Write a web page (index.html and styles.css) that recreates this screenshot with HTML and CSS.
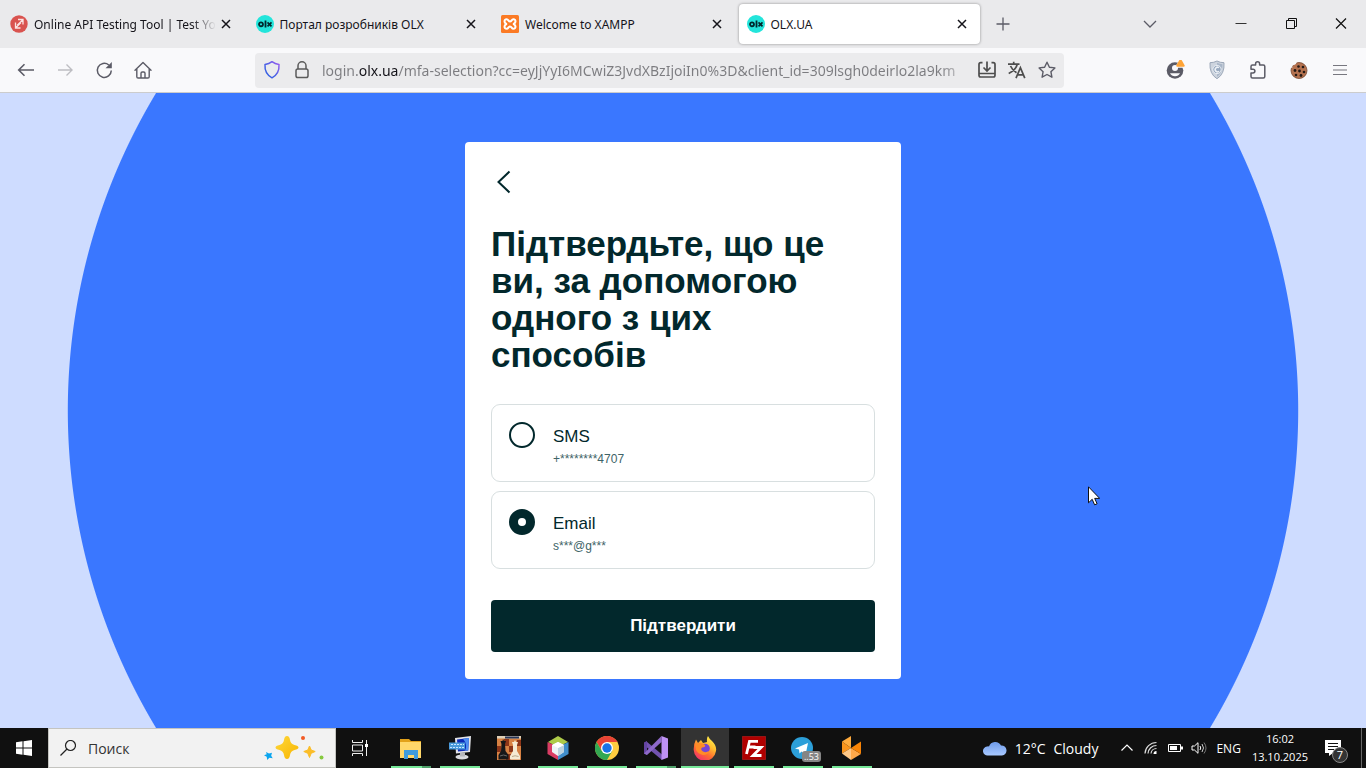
FILE: index.html
```html
<!DOCTYPE html>
<html lang="uk">
<head>
<meta charset="utf-8">
<title>OLX.UA</title>
<link rel="stylesheet" href="styles.css">
</head>
<body>
<svg class="defs" aria-hidden="true">
  <symbol id="close" viewBox="0 0 16 16"><path d="M4 4l8 8M12 4l-8 8" fill="none" stroke="#15141a" stroke-width="1.5"/></symbol>
  <symbol id="olx" viewBox="0 0 18 18"><circle cx="9" cy="9" r="9" fill="#23e5db"/><circle cx="5" cy="9.300" r="2" fill="none" stroke="#02282c" stroke-width="1.800"/><path d="M9.500 5.500v7" stroke="#02282c" stroke-width="1.800"/><path d="M11.500 7.300l4 4M15.500 7.300l-4 4" stroke="#02282c" stroke-width="1.700"/></symbol>
</svg>

<header class="browser">
  <div class="tabstrip">
    <div class="tabs">
      <div class="tab">
        <button class="tab-title fade" type="button">
          <svg class="favicon" viewBox="0 0 18 18"><circle cx="9" cy="9" r="8.700" fill="#d9534f"/><path d="M8 4.500h5v5M12.700 5L7 10.500M5.500 7.500v5.500h5M6 12.500l5-5" fill="none" stroke="#fbe3e2" stroke-width="1.300"/></svg>
          <span>Online API Testing Tool | Test Yo</span>
        </button>
        <button class="tab-close" type="button" aria-label="Close tab"><svg class="i16"><use href="#close"/></svg></button>
      </div>
      <div class="tab">
        <button class="tab-title" type="button"><svg class="favicon"><use href="#olx"/></svg><span>Портал розробників OLX</span></button>
        <button class="tab-close" type="button" aria-label="Close tab"><svg class="i16"><use href="#close"/></svg></button>
      </div>
      <div class="tab">
        <button class="tab-title" type="button">
          <svg class="favicon" viewBox="0 0 18 18"><rect width="18" height="18" rx="1.500" fill="#fb7a24"/><path d="M6 9C3 8.500 2.500 4.200 5.700 4.200C7.500 4.200 7.200 6.500 9 6.500S10.500 4.200 12.300 4.200C15.500 4.200 15 8.500 12 9C15 9.500 15.500 13.800 12.300 13.800C10.500 13.800 10.800 11.500 9 11.500S7.500 13.800 5.700 13.800C2.500 13.800 3 9.500 6 9z" fill="none" stroke="#fff" stroke-width="2"/></svg>
          <span>Welcome to XAMPP</span>
        </button>
        <button class="tab-close" type="button" aria-label="Close tab"><svg class="i16"><use href="#close"/></svg></button>
      </div>
      <div class="tab active">
        <button class="tab-title" type="button"><svg class="favicon"><use href="#olx"/></svg><span>OLX.UA</span></button>
        <button class="tab-close" type="button" aria-label="Close tab"><svg class="i16"><use href="#close"/></svg></button>
      </div>
    </div>
    <button class="new-tab" type="button" aria-label="New tab"><svg class="i16" viewBox="0 0 16 16"><path d="M8 1.500v13M1.500 8h13" stroke="#5b5b66" stroke-width="1.300"/></svg></button>
    <button class="all-tabs" type="button" aria-label="List all tabs"><svg class="i16" viewBox="0 0 16 16"><path d="M2 5l6 6 6-6" fill="none" stroke="#5b5b66" stroke-width="1.300"/></svg></button>
    <div class="window-buttons">
      <button type="button" aria-label="Minimize"><svg class="i16" viewBox="0 0 16 16"><path d="M2.500 7.500h11" stroke="#333" /></svg></button>
      <button type="button" aria-label="Restore"><svg class="i16" viewBox="0 0 16 16"><path d="M5.500 4.500v-2h8v8h-2M3.500 4.500h8v8h-8z" fill="none" stroke="#111"/></svg></button>
      <button type="button" aria-label="Close"><svg class="i16" viewBox="0 0 16 16"><path d="M3 2.500l10 10M13 2.500l-10 10" stroke="#111" stroke-width="1.200"/></svg></button>
    </div>
  </div>

  <div class="toolbar">
    <nav class="nav-buttons" aria-label="Navigation">
      <button type="button" aria-label="Back"><svg class="i20" viewBox="0 0 20 20"><path d="M18 10H2.800M8.500 4.200L2.700 10l5.800 5.800" fill="none" stroke="#5b5b66" stroke-width="1.600"/></svg></button>
      <button type="button" aria-label="Forward" disabled><svg class="i20" viewBox="0 0 20 20"><path d="M3 10h14M11.500 4.500L17 10l-5.500 5.500" fill="none" stroke="#bdbdc2" stroke-width="1.400"/></svg></button>
      <button type="button" aria-label="Reload"><svg class="i20" viewBox="0 0 20 20"><path d="M17.300 10.500A7 7 0 1 1 14.800 5" fill="none" stroke="#5b5b66" stroke-width="1.500"/><path d="M17.800 2v6.300h-6.300z" fill="#5b5b66"/></svg></button>
      <button type="button" aria-label="Home"><svg class="i20" viewBox="0 0 20 20"><path d="M2 10.200L10 2.500l8 7.700M3.800 8.800v7.900q0 1.300 1.300 1.300h9.800q1.300 0 1.300-1.300V8.800M8 18v-4.700q0-1.300 1.300-1.300h1.400q1.300 0 1.300 1.300V18" fill="none" stroke="#5b5b66" stroke-width="1.400" stroke-linejoin="round" stroke-linecap="round"/></svg></button>
    </nav>

    <div class="urlbar">
      <svg class="i20" viewBox="0 0 20 20"><defs><linearGradient id="shield" x1="1" y1="0" x2="0" y2="1"><stop offset="0" stop-color="#a05cf0"/><stop offset=".5" stop-color="#4f5fe6"/><stop offset="1" stop-color="#2a62e0"/></linearGradient></defs><path d="M10 1.700c2 1.500 4.500 2.400 7 2.700c.4 6-1.700 10.700-7 13.400C4.700 15.100 2.600 10.400 3 4.400c2.500-.3 5-1.200 7-2.700z" fill="none" stroke="url(#shield)" stroke-width="1.500" stroke-linejoin="round"/></svg>
      <svg class="i20" viewBox="0 0 20 20"><path d="M6 9V5.800a4 4 0 0 1 8 0V9" fill="none" stroke="#5b5b5b" stroke-width="1.500"/><rect x="4" y="9" width="12" height="8.500" rx="1.800" fill="none" stroke="#5b5b5b" stroke-width="1.500"/></svg>
      <input class="url" type="text" aria-label="Address" value="login.olx.ua/mfa-selection?cc=eyJjYyI6MCwiZ3JvdXBzIjoiIn0%3D&amp;client_id=309lsgh0deirlo2la9km">
      <button type="button" aria-label="Install"><svg class="i20" viewBox="0 0 20 20"><path d="M5.500 2.700H3.700Q2 2.700 2 4.400v10.900Q2 17 3.700 17h12.600Q18 17 18 15.300V4.400Q18 2.700 16.300 2.700h-1.800M2 13.500h16" fill="none" stroke="#4d4d4d" stroke-width="1.700"/><path d="M10 1.500v9M6.500 7.500L10 11l3.500-3.500" fill="none" stroke="#4d4d4d" stroke-width="1.700"/></svg></button>
      <button type="button" aria-label="Translate"><svg class="i20" viewBox="0 0 20 20"><path d="M1 4.200h11.500M6.700 1.800v2.400M10.200 4.500C9 8.500 5.500 11.800 1.700 13.500M3.500 6c1.200 2.800 3.200 5 6 6.800M9 18.200l4.400-10.500 4.400 10.500M10.500 14.800h5.800" fill="none" stroke="#4d4d4d" stroke-width="1.700"/></svg></button>
      <button type="button" aria-label="Bookmark"><svg class="i20" viewBox="0 0 20 20"><path d="M10 2.200l2.400 5 5.500.7-4 3.800 1 5.500-4.900-2.700-4.900 2.700 1-5.500-4-3.800 5.500-.7z" fill="none" stroke="#5b5b66" stroke-width="1.400" stroke-linejoin="round"/></svg></button>
    </div>

    <div class="extensions">
      <button type="button" aria-label="Account"><svg class="i20" viewBox="0 0 20 20"><circle cx="9" cy="10.500" r="8.300" fill="#5b5b66"/><circle cx="9" cy="8" r="3" fill="#f9f9fb"/><path d="M4 13.200h10q-1.500 3-5 3t-5-3z" fill="#f9f9fb"/><path d="M14.300-1.200l5.700 9H8.600z" fill="#f9f9fb"/><path d="M14.500-.6q.8 0 1.300.9l2.800 5q.5 1.300-1 1.500h-6.200q-1.500-.2-1-1.500l2.800-5q.5-.9 1.300-.9z" fill="#ffa436"/></svg></button>
      <button type="button" aria-label="Privacy shield"><svg class="i20" viewBox="0 0 20 20"><path d="M10 1q3 1.700 7 1.700q.8 11.300-7 16Q2.200 14 3 2.700Q7 2.700 10 1z" fill="#cdd4de" stroke="#9ba7b8"/><path d="M10 2.800q2.500 1.300 5.500 1.500q.3 8.700-5.500 12.500z" fill="#a9b6c8"/><circle cx="10" cy="9.500" r="4.200" fill="#98a9bf" stroke="#edf1f6"/><path d="M12 7.800a2.300 2.300 0 1 0 0 3.500" fill="none" stroke="#edf1f6" stroke-width="1.500"/></svg></button>
      <button type="button" aria-label="Extensions"><svg class="i20" viewBox="0 0 20 20"><path d="M3 8V6.500Q3 5 4.500 5H7.600V3.700a2 2 0 0 1 4 0V5h3.700q1.500 0 1.500 1.500v10q0 1.500-1.500 1.500H4.500Q3 18 3 16.500V13h2a1.900 1.900 0 0 0 0-3.800H3z" fill="none" stroke="#5b5b66" stroke-width="1.500" stroke-linejoin="round"/></svg></button>
      <button type="button" aria-label="Cookies"><svg class="i20" viewBox="0 0 20 20"><circle cx="10" cy="10.500" r="8" fill="#b5724f" stroke="#75462f" stroke-width=".8"/><path d="M1 1h7q-.500 3.500-3 4t-1.500 2.500L1 8z" fill="#f9f9fb"/><g fill="#251a16"><circle cx="9.500" cy="6.500" r="1.300"/><circle cx="14" cy="7" r="1.300"/><circle cx="6" cy="10.500" r="1.400"/><circle cx="10.500" cy="11" r="1.400"/><circle cx="15" cy="12" r="1.300"/><circle cx="7" cy="15" r="1.300"/><circle cx="12" cy="15.500" r="1.400"/></g></svg></button>
      <button type="button" aria-label="Menu"><svg class="i20" viewBox="0 0 20 20"><path d="M3 5.500h14M3 10h14M3 14.500h14" stroke="#77777f" stroke-width="1.200"/></svg></button>
    </div>
  </div>
</header>

<main class="page">
  <form class="card">
    <button class="back" type="button" aria-label="Назад"><svg viewBox="0 0 26 26"><path d="M18.500 2.500L7.500 13l11 10.500" fill="none" stroke="#02282c" stroke-width="2"/></svg></button>
    <h1 class="heading">Підтвердьте, що це ви, за допомогою одного з цих способів</h1>
    <div class="options">
      <label class="option">
        <input class="radio" type="radio" name="method" value="sms">
        <span class="option-text"><span class="option-name">SMS</span><span class="option-hint">+********4707</span></span>
      </label>
      <label class="option">
        <input class="radio" type="radio" name="method" value="email" checked>
        <span class="option-text"><span class="option-name">Email</span><span class="option-hint">s***@g***</span></span>
      </label>
    </div>
    <button class="confirm" type="button">Підтвердити</button>
  </form>
  <svg class="cursor" viewBox="0 0 12 20"><path d="M.500 .800v16l3.700-3.500 2.400 5.500 2.500-1-2.400-5.400h5z" fill="#fff" stroke="#111"/></svg>
</main>

<footer class="taskbar">
  <button class="start" type="button" aria-label="Start"><svg class="i16" viewBox="0 0 16 16"><path d="M0 2.300L6.500 1.300V7.500H0zM7.500 1.200L16 0v7.500H7.500zM0 8.500h6.500v6.200L0 13.700zM7.500 8.500H16V16l-8.500-1.200z" fill="#fff"/></svg></button>
  <label class="search">
    <svg class="i16" viewBox="0 0 16 16"><circle cx="10.500" cy="5.500" r="5" fill="none" stroke="#222" stroke-width="1.200"/><path d="M7 9L.500 15.500" stroke="#222" stroke-width="1.300"/></svg>
    <input type="text" aria-label="Поиск" placeholder="Поиск">
    <svg class="sparkles" viewBox="0 0 62 26"><defs><linearGradient id="gold" x1="0" y1="0" x2="1" y2="1"><stop offset="0" stop-color="#ffd83b"/><stop offset="1" stop-color="#f7b500"/></linearGradient></defs><path d="M24 1q2.500 0 3 4 .6 4 4.500 5 4 .8 4 2.500t-4 2.500q-3.900 1-4.500 5-.5 4-3 4t-3-4q-.6-4-4.500-5-4-.8-4-2.500t4-2.500q3.900-1 4.500-5 .5-4 3-4z" fill="url(#gold)"/><path d="M46.500 11l1.700 4 4 1.500-4 1.800-1.700 4.200-1.700-4.200-4-1.800 4-1.500z" fill="#fbbd28" stroke="#fbbd28" stroke-linejoin="round"/><path d="M3 17l3 1.500 3-.8-.8 3 1.500 2.500-3.300-.5-2.200 2.300-.5-3.200-2.700-1.500 2.700-1z" fill="#0aa5ef"/><circle cx="40" cy="3" r="2" fill="#f25a24"/><circle cx="58.500" cy="22.500" r="2" fill="#86c940"/></svg>
  </label>
  <button class="task-view" type="button" aria-label="Task view"><svg class="i16" viewBox="0 0 16 16"><path d="M.500 0v2.500h10V0M.500 16v-2.500h10V16M.500 5h10v6H.500zM14.500 0v16" fill="none" stroke="#eee"/><path d="M13 4h3v3h-3z" fill="#fff"/></svg></button>

  <div class="apps">
    <button class="app open multi" type="button" aria-label="Explorer"><svg viewBox="0 0 24 24"><path d="M1 3h9l2 2h10v4H1z" fill="#e2a11a"/><path d="M1 6h21v16H1z" fill="#ffd76a"/><path d="M5 23v-9h14v9h-4v-4H9v4z" fill="#3e9bdd"/></svg></button>
    <button class="app open" type="button" aria-label="Remote desktop"><svg viewBox="0 0 24 24"><path d="M7 2l16-2-1 16-14 1.500z" fill="#e3e4e8"/><path d="M9 3.500l12-1.500-.8 12.500L10 15.500z" fill="#0c2bb8"/><path d="M15 2.700l6-.7-.8 12.500-3.200.3q3-6-2-12.100z" fill="#4d8df0"/><ellipse cx="14" cy="21" rx="6.500" ry="2.500" fill="#d9dbde"/><path d="M12 16.500h5v4h-5z" fill="#b5b7bb"/><path d="M1 6.500h16v7H1z" fill="#4a9adb"/><path d="M3 8.500h13M2 11.500h14" stroke="#c8e6ff" stroke-dasharray="2 1"/></svg></button>
    <button class="app" type="button" aria-label="Chess"><svg viewBox="0 0 24 24"><path d="M0 0h24v24H0z" fill="#d78143"/><path d="M7 3h5v7H7zM0 10h4v6H0zM12 10h4v6h-4zM20 4h4v6h-4zM9 18h5v6H9z" fill="#8d3518"/><path d="M0 0h24v2.500H0z" fill="#dfd0b8"/><path d="M8 .500h14v2H8z" fill="#26365a"/><path d="M6 3l1 2h2L8 8l.5 7 3 4v4.500H1.500V19l2.500-4L4.500 8l-1-3h2z" fill="#171719"/><path d="M3 20q3.500-2 7 0" fill="none" stroke="#666"/><path d="M18 4l1 2h2l-1 3v6l3 5v3.500H13V20l3-5V9l-1-3h2z" fill="#f5ead2"/><path d="M15 20.500q3-1.500 6.500 0" fill="none" stroke="#b7a98b"/></svg></button>
    <button class="app open" type="button" aria-label="NetBeans"><svg viewBox="0 0 24 24"><path d="M12 0l10 6-10 5L2 6z" fill="#aecb49"/><path d="M1.500 6L12 11v13L1.500 18z" fill="#d93c63"/><path d="M22.500 6L12 11v13l10.500-6z" fill="#408ecb"/><path d="M12 6l6 3v7l-6 4-6-4V9z" fill="#edf4f7"/><path d="M12 12l6-3v7l-6 4z" fill="#bdd3df"/><path d="M6 9l6 3 6-3-6-3z" fill="#fff"/></svg></button>
    <button class="app open" type="button" aria-label="Chrome"><svg viewBox="0 0 24 24"><circle cx="12" cy="12" r="12" fill="#ffcd40"/><path d="M1.600 6A12 12 0 0 1 22.400 6H12L6.800 15z" fill="#e94335"/><path d="M1.600 6A12 12 0 0 0 12 24l5.200-9-10.400 0z" fill="#33a852"/><circle cx="12" cy="12" r="6" fill="#fff"/><circle cx="12" cy="12" r="4.700" fill="#1a73e8"/></svg></button>
    <button class="app open multi" type="button" aria-label="Visual Studio"><svg viewBox="0 0 24 24"><path d="M0 7l2.500-1.500L18 18.500V24L0 9z" fill="#7252b0"/><path d="M0 6.500l3-1.500v14l-3-1.500z" fill="#6444a2"/><path d="M0 17.500L17.500 0v6L3 19z" fill="#8e69ca"/><path d="M17.500 0L24 2.500v19L17.500 24z" fill="#be91f4"/></svg></button>
    <button class="app open current" type="button" aria-label="Firefox"><svg viewBox="0 0 24 24"><defs><linearGradient id="fox" x1=".8" y1="0" x2=".2" y2="1"><stop offset="0" stop-color="#fff44f"/><stop offset=".35" stop-color="#ffbd2f"/><stop offset=".65" stop-color="#ff6a30"/><stop offset="1" stop-color="#f02a74"/></linearGradient></defs><path d="M15 0q2 4 4 5 5 5 4 10a11.200 11.200 0 0 1-22.300-1Q.500 8 3 3.500L5 7l3-3 2 3 4-1q-.500-4 1-6z" fill="url(#fox)"/><circle cx="12" cy="12.500" r="4.800" fill="#7645d6"/><path d="M2 8q6-2.500 10 1 1 2-3 2.500-2 2 1 4 3 1.500 6-.500-1 4-6 4-5-1-7-5z" fill="#ff8c27"/></svg></button>
    <button class="app open" type="button" aria-label="FileZilla"><svg viewBox="0 0 24 24"><path d="M.500 .500h23v23H.500z" fill="#b00000" stroke="#d02020" stroke-dasharray="1 1"/><path d="M4.500 18L7.500 5.300h8.500M6.500 11h7M11.500 11.500h7.500l-8 8h8.500" fill="none" stroke="#fff" stroke-width="2.800"/></svg></button>
    <button class="app open" type="button" aria-label="Telegram"><svg viewBox="0 0 24 24"><circle cx="11" cy="12" r="11" fill="#2c9fd9"/><path d="M4 12.500L17 7l-2.500 12-4-3.500-2 2-.500-4z" fill="#fff"/></svg><span class="badge">..53</span></button>
    <button class="app open" type="button" aria-label="Local server"><svg viewBox="0 0 24 24"><path d="M2 5.500L11 0v12z" fill="#ffab3d"/><path d="M2 5.500L11 12 2 17.500z" fill="#f9941d"/><path d="M2 17.500L11 12v12z" fill="#ffc887"/><path d="M11 12l10 6-10 6z" fill="#ffa94a"/><path d="M11 12l10-6.500V18z" fill="#f98406"/></svg></button>
  </div>

  <div class="tray">
    <button class="weather" type="button">
      <svg viewBox="0 0 24 18"><defs><linearGradient id="cloud" x1="0" y1="0" x2="0" y2="1"><stop offset="0" stop-color="#6e9bea"/><stop offset="1" stop-color="#a9c9ff"/></linearGradient></defs><path d="M5 16.500a4.500 4.500 0 0 1-1-9q1.500-.500 2 0A6.500 6.500 0 0 1 18 6.500a5 5 0 0 1 1 10z" fill="url(#cloud)"/></svg>
      <span>12°C</span><span>Cloudy</span>
    </button>
    <button type="button" aria-label="Hidden icons"><svg class="i16" viewBox="0 0 16 16"><path d="M2.500 10.500L8 5l5.500 5.500" fill="none" stroke="#fff" stroke-width="1.200"/></svg></button>
    <button type="button" aria-label="Network"><svg class="i16" viewBox="0 0 16 16"><g fill="none" stroke="#ddd" stroke-width="1.200"><path d="M2 13.500A11.500 11.500 0 0 1 13.500 2.500M5 13.500a8.500 8.500 0 0 1 8.500-8M8 13.500A5.500 5.500 0 0 1 13.500 8.500"/></g><path d="M10.500 14a3 3 0 0 1 3-3v3z" fill="#fff"/></svg></button>
    <button type="button" aria-label="Battery"><svg class="i16" viewBox="0 0 16 16"><path d="M1.500 4.500h12v7h-12z" fill="none" stroke="#fff"/><path d="M3 6h7v4H3zM14 6.500h2v3h-2z" fill="#fff"/></svg></button>
    <button type="button" aria-label="Volume"><svg class="i16" viewBox="0 0 16 16"><path d="M1 6h2.500L7 2.700v10.600L3.500 10H1z" fill="none" stroke="#fff"/><path d="M9 6q1.500 2 0 4" fill="none" stroke="#fff"/><path d="M11 4q3 4 0 8" fill="none" stroke="#ccc"/><path d="M13 2.500q4 5.500 0 11" fill="none" stroke="#777"/></svg></button>
    <button class="lang" type="button">ENG</button>
    <button class="clock" type="button"><span>16:02</span><span>13.10.2025</span></button>
    <button class="notices" type="button" aria-label="Notifications"><svg class="i16" viewBox="0 0 16 16"><path d="M0 0h16v13H8l-4 3v-3H0z" fill="#fff"/><path d="M3 3.500h10M3 6.500h10M3 9.500h6" stroke="#111"/></svg><span class="count">7</span></button>
    <button class="show-desktop" type="button" aria-label="Show desktop"></button>
  </div>
</footer>
</body>
</html>
```

FILE: styles.css
```css
* { box-sizing: border-box; }

body {
  margin: 0;
  height: 100vh;
  display: flex;
  flex-direction: column;
  font-family: "Open Sans", "Noto Sans", sans-serif;
  font-size: 12px;
  color: #15141a;
  overflow: hidden;
}

button, input {
  margin: 0;
  padding: 0;
  border: 0;
  background: none;
  font: inherit;
  color: inherit;
}

svg { display: block; flex: none; }
.defs { position: absolute; width: 0; height: 0; }
.i16 { width: 16px; height: 16px; }
.i20 { width: 20px; height: 20px; }

/* Browser window */
.browser { font-family: "Noto Sans", "Open Sans", sans-serif; }
.tabstrip {
  display: flex;
  align-items: center;
  height: 48px;
  padding-left: 2px;
  background: #eaeaec;
}
.tabs {
  flex: 0 1 978px;
  min-width: 0;
  display: grid;
  grid-template-columns: repeat(4, minmax(0, 1fr));
  gap: 4px;
}
.tab {
  display: flex;
  align-items: center;
  gap: 2px;
  height: 40px;
  padding: 0 10px 0 8px;
  border-radius: 4px;
}
.tab.active { background: #fff; box-shadow: 0 0 3px rgba(0, 0, 0, .4); }
.tab-title {
  flex: 1;
  min-width: 0;
  display: flex;
  align-items: center;
  gap: 6px;
  overflow: hidden;
  white-space: nowrap;
}
.tab-title.fade { mask-image: linear-gradient(to left, transparent, #000 24px); }
.favicon { width: 18px; height: 18px; }
.new-tab { margin-left: 15px; }
.all-tabs { margin-left: auto; }
.window-buttons { display: flex; margin-left: 58px; }
.window-buttons button {
  display: flex;
  justify-content: center;
  width: 50px;
}

.toolbar {
  display: flex;
  align-items: center;
  height: 45px;
  padding: 0 6px;
  background: #f9f9fb;
  border-bottom: 1px solid #ccc;
}
.nav-buttons, .extensions { display: flex; align-items: center; }
.nav-buttons button, .extensions button {
  display: flex;
  justify-content: center;
  width: 39px;
}
.extensions button { width: 41px; }
.urlbar {
  flex: 1;
  min-width: 0;
  display: flex;
  align-items: center;
  gap: 10px;
  height: 35px;
  margin: 0 91px 0 93px;
  padding: 0 7px;
  border-radius: 4px;
  background: #ebebed;
}
.url {
  flex: 1;
  min-width: 0;
  height: 24px;
  margin-right: -3px;
  font-size: 14px;
  color: transparent;
  background-image:
    linear-gradient(to left, #ebebed, transparent 32px),
    linear-gradient(to right, #7c7c80 37px, #15141a 37px, #15141a 76px, #7c7c80 76px);
  background-clip: text;
}

/* Sign-in page */
.page {
  position: relative;
  flex: 1;
  min-height: 0;
  display: flex;
  align-items: center;
  justify-content: center;
  background: radial-gradient(circle at center, #3a77ff 45vw, #cedcff calc(45vw + 1px));
  font-family: "Liberation Sans", Arial, sans-serif;
  color: #02282c;
}
.card {
  width: 436px;
  max-width: 100%;
  padding: 27px 26px;
  border-radius: 4px;
  background: #fff;
}
.back { display: block; width: 26px; height: 26px; }
.heading {
  margin: 30px 12px 31px 0;
  font-size: 35px;
  line-height: 37px;
  font-weight: 700;
}
.options { display: grid; gap: 9px; }
.option {
  display: flex;
  align-items: flex-start;
  gap: 18px;
  padding: 17px 17px 15px;
  border: 1px solid #d8dfe0;
  border-radius: 9px;
}
.radio {
  appearance: none;
  flex: none;
  width: 26px;
  height: 26px;
  border: 2px solid #02282c;
  border-radius: 50%;
  background: #fff;
}
.radio:checked { border-width: 9px; }
.option-text { display: grid; }
.option-name { font-size: 17px; line-height: 30px; }
.option-hint { font-size: 12px; line-height: 14px; color: #406367; }
.confirm {
  display: block;
  width: 100%;
  height: 52px;
  margin-top: 31px;
  border-radius: 4px;
  background: #02282c;
  color: #fff;
  font-size: 17px;
  font-weight: 700;
}
.cursor {
  position: absolute;
  left: 1088px;
  top: 393px;
  width: 12px;
  height: 20px;
}

/* Taskbar */
.taskbar {
  display: flex;
  align-items: stretch;
  height: 40px;
  background: #101010;
  color: #fff;
}
.start, .task-view {
  display: flex;
  align-items: center;
  justify-content: center;
  width: 48px;
}
.search {
  flex: 0 1 288px;
  min-width: 0;
  display: flex;
  align-items: center;
  gap: 12px;
  padding: 0 10px 0 11px;
  border: 1px solid #c4c4c0;
  background: #f2f2f2;
}
.search input { flex: 1; min-width: 0; font-size: 14px; color: #222; }
.search input::placeholder { color: #333; opacity: 1; }
.sparkles { width: 62px; height: 26px; }
.apps { display: flex; gap: 1px; margin-left: 3px; }
.app {
  position: relative;
  display: flex;
  align-items: center;
  justify-content: center;
  width: 48px;
}
.app > svg { width: 24px; height: 24px; }
.app.open::after {
  content: "";
  position: absolute;
  left: 4px;
  right: 4px;
  bottom: 0;
  height: 2px;
  background: #76e898;
}
.app.multi::after { background: linear-gradient(to right, #76e898 31px, #4fa06a 31px); }
.app.current { background: #333; }
.app.current::after { left: 0; right: 0; }
.badge {
  position: absolute;
  right: 6px;
  bottom: 6px;
  padding: 0 2px;
  border-radius: 3px;
  background: #858585;
  font-size: 9px;
  line-height: 11px;
}
.tray { display: flex; align-items: center; margin-left: auto; height: 40px; }
.tray > button { margin-right: 8px; }
.tray > .weather {
  display: flex;
  align-items: center;
  gap: 8px;
  margin-right: 21px;
  font-size: 14px;
}
.weather svg { width: 24px; height: 18px; }
.tray > .lang { margin: 0 11px 0 1px; font-size: 12px; }
.tray > .clock {
  display: grid;
  margin-right: 17px;
  font-size: 11px;
  line-height: 18px;
  text-align: center;
}
.notices { position: relative; }
.count {
  position: absolute;
  left: 7px;
  top: 7px;
  width: 16px;
  height: 16px;
  border: 1px solid #888;
  border-radius: 50%;
  background: #333;
  font-size: 11px;
  line-height: 14px;
  text-align: center;
}
.tray > .show-desktop {
  width: 5px;
  height: 40px;
  margin: 0 0 0 12px;
  border-left: 1px solid #666;
}
```
